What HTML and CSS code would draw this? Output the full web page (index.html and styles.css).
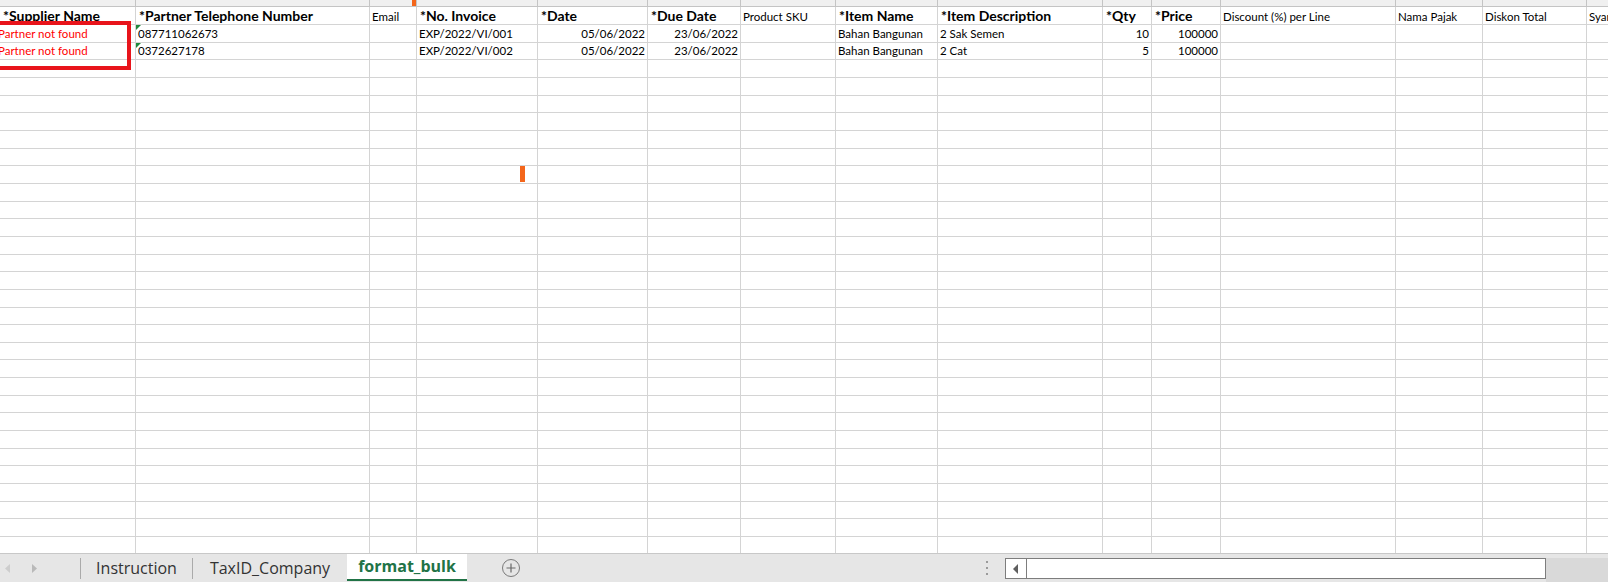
FILE: index.html
```html
<!DOCTYPE html>
<html lang="en">
<head>
    <meta charset="UTF-8">
    <meta name="viewport" content="width=device-width, initial-scale=1.0">
    <title>format_bulk</title>
    <link rel="stylesheet" href="styles.css">
</head>
<body>

    <div class="workbook">
        <div class="sheet">
            <div class="grid" id="grid">
                <!-- Row scrolled off the top of the view -->
                <div class="row row-cut">
                    <div class="cell"></div>
                    <div class="cell"></div>
                    <div class="cell"></div>
                    <div class="cell"></div>
                    <div class="cell"></div>
                    <div class="cell"></div>
                    <div class="cell"></div>
                    <div class="cell"></div>
                    <div class="cell"></div>
                    <div class="cell"></div>
                    <div class="cell"></div>
                    <div class="cell"></div>
                    <div class="cell"></div>
                    <div class="cell"></div>
                    <div class="cell"></div>
                </div>

                <!-- Column titles -->
                <div class="row row-head">
                    <div class="cell first bold">*Supplier Name</div>
                    <div class="cell bold">*Partner Telephone Number</div>
                    <div class="cell">Email</div>
                    <div class="cell bold">*No. Invoice</div>
                    <div class="cell bold">*Date</div>
                    <div class="cell bold">*Due Date</div>
                    <div class="cell">Product SKU</div>
                    <div class="cell bold">*Item Name</div>
                    <div class="cell bold">*Item Description</div>
                    <div class="cell bold">*Qty</div>
                    <div class="cell bold">*Price</div>
                    <div class="cell">Discount (%) per Line</div>
                    <div class="cell">Nama Pajak</div>
                    <div class="cell">Diskon Total</div>
                    <div class="cell">Syarat Pembayaran</div>
                </div>

                <!-- Data rows -->
                <div class="row">
                    <div class="cell first error">Partner not found</div>
                    <div class="cell num-text">087711062673</div>
                    <div class="cell"></div>
                    <div class="cell">EXP/2022/VI/001</div>
                    <div class="cell right">05/06/2022</div>
                    <div class="cell right">23/06/2022</div>
                    <div class="cell"></div>
                    <div class="cell">Bahan Bangunan</div>
                    <div class="cell">2 Sak Semen</div>
                    <div class="cell right">10</div>
                    <div class="cell right">100000</div>
                    <div class="cell"></div>
                    <div class="cell"></div>
                    <div class="cell"></div>
                    <div class="cell"></div>
                </div>
                <div class="row">
                    <div class="cell first error">Partner not found</div>
                    <div class="cell num-text">0372627178</div>
                    <div class="cell"></div>
                    <div class="cell">EXP/2022/VI/002</div>
                    <div class="cell right">05/06/2022</div>
                    <div class="cell right">23/06/2022</div>
                    <div class="cell"></div>
                    <div class="cell">Bahan Bangunan</div>
                    <div class="cell">2 Cat</div>
                    <div class="cell right">5</div>
                    <div class="cell right">100000</div>
                    <div class="cell"></div>
                    <div class="cell"></div>
                    <div class="cell"></div>
                    <div class="cell"></div>
                </div>
            </div>

            <!-- Annotation and selection marks drawn over the grid -->
            <div class="error-box"></div>
            <div class="mark mark-col"></div>
            <div class="mark mark-cursor"></div>
        </div>

        <!-- Sheet tabs -->
        <div class="tabbar">
            <div class="tab-nav">
                <svg width="6" height="9" viewBox="0 0 6 9"><path d="M5 0 L0 4.5 L5 9 Z" fill="#cdcdcd"/></svg>
                <svg width="6" height="9" viewBox="0 0 6 9"><path d="M1 0 L6 4.5 L1 9 Z" fill="#b9b9b9"/></svg>
            </div>
            <span class="tab-sep"></span>
            <div class="tab tab-instruction">Instruction</div>
            <span class="tab-sep"></span>
            <div class="tab tab-taxid">TaxID_Company</div>
            <div class="tab tab-active">format_bulk</div>
            <div class="tab-add">
                <svg width="20" height="20" viewBox="0 0 20 20">
                    <circle cx="10" cy="10" r="8.5" fill="none" stroke="#7a7a7a" stroke-width="1"/>
                    <path d="M10 5.5 V14.5 M5.5 10 H14.5" stroke="#6a6a6a" stroke-width="1.2"/>
                </svg>
            </div>
            <div class="tab-space"></div>
            <div class="split-dots">
                <svg width="4" height="16" viewBox="0 0 4 16">
                    <rect x="1" y="1" width="2" height="2" fill="#9a9a9a"/>
                    <rect x="1" y="7" width="2" height="2" fill="#9a9a9a"/>
                    <rect x="1" y="13" width="2" height="2" fill="#9a9a9a"/>
                </svg>
            </div>
            <div class="hscroll">
                <div class="hscroll-btn">
                    <svg width="6" height="10" viewBox="0 0 6 10"><path d="M5 0 L0 5 L5 10 Z" fill="#5f5f5f"/></svg>
                </div>
                <div class="hscroll-thumb"></div>
                <div class="hscroll-track"></div>
            </div>
        </div>
    </div>

    <script>
        // Fill the rest of the visible sheet with empty rows
        const grid = document.getElementById('grid');
        for (let r = 0; r < 28; r++) {
            const row = document.createElement('div');
            row.className = 'row';
            for (let c = 0; c < 15; c++) {
                const cell = document.createElement('div');
                cell.className = 'cell';
                row.appendChild(cell);
            }
            grid.appendChild(row);
        }
    </script>

</body>
</html>
```

FILE: styles.css
```css
html, body {
    margin: 0;
    padding: 0;
    overflow: hidden;
    background-color: white;
}

body {
    font-family: Lato, "Liberation Sans", sans-serif;
    color: #000;
}

.workbook {
    width: 1608px;
    height: 582px;
    display: flex;
    flex-direction: column;
}

/* Grid */

.sheet {
    position: relative;
    height: 553px;
    overflow: hidden;
}

.grid {
    margin-left: -6px;
    width: max-content;
}

.row {
    display: grid;
    grid-template-columns: 142px 234px 47px 121px 110px 93px 95px 102px 165px 49px 69px 175px 87px 104px 100px;
    height: 17.667px;
}

.cell {
    position: relative;
    box-sizing: border-box;
    display: flex;
    align-items: flex-end;
    padding: 0 2px 2px 2px;
    border-right: 1px solid #d4d4d4;
    border-bottom: 1px solid #d4d4d4;
    font-size: 11.5px;
    line-height: 13px;
    white-space: nowrap;
    overflow: hidden;
}

.row-cut {
    height: 7px;
}

.row-cut .cell {
    background-color: #f0f0f0;
    border-color: #c4c4c4;
}

.row-head {
    height: 18px;
}

.row-head .cell {
    padding-bottom: 1px;
}

.row-head .cell.bold {
    font-size: 14px;
    line-height: 15px;
    font-weight: bold;
    padding-left: 3px;
}

.row-head .cell.first {
    padding-left: 9px;
}

.cell.first {
    padding-left: 4px;
}

.cell.right {
    justify-content: flex-end;
    padding-right: 2px;
}

.cell.error {
    color: #ff0000;
}

/* green "number stored as text" flag */
.cell.num-text::before {
    content: "";
    position: absolute;
    top: 0;
    left: 0;
    border-top: 5px solid #1e8a3c;
    border-right: 5px solid transparent;
}

.error-box {
    position: absolute;
    left: -10px;
    top: 21px;
    width: 141px;
    height: 49px;
    box-sizing: border-box;
    border: 4px solid #e8141b;
}

.mark {
    position: absolute;
    background-color: #f4661b;
}

.mark-col {
    left: 412px;
    top: 0;
    width: 4px;
    height: 6px;
}

.mark-cursor {
    left: 520px;
    top: 166px;
    width: 5px;
    height: 16px;
}

/* Sheet tabs */

.tabbar {
    height: 28px;
    display: flex;
    align-items: stretch;
    background-color: #e6e6e6;
    border-top: 1px solid #c8c8c8;
    font-family: "Open Sans", "Noto Sans", sans-serif;
    font-size: 16px;
    color: #333;
}

.tab-nav {
    width: 80px;
    display: flex;
    align-items: center;
    gap: 20px;
    padding-left: 5px;
    box-sizing: border-box;
}

.tab-sep {
    width: 1px;
    height: 21px;
    align-self: center;
    background-color: #aaaaaa;
}

.tab {
    display: flex;
    align-items: center;
    justify-content: center;
    line-height: 28px;
    padding-bottom: 1px;
}

.tab-instruction {
    width: 111px;
}

.tab-taxid {
    width: 154px;
}

.tab-active {
    width: 120px;
    background-color: white;
    color: #217346;
    font-weight: bold;
    border-bottom: 2px solid #217346;
    margin-bottom: 1px;
    padding-bottom: 0;
    line-height: 25px;
}

.tab-add {
    margin-left: 34px;
    display: flex;
    align-items: center;
}

.tab-space {
    flex: 1;
}

.split-dots {
    display: flex;
    align-items: center;
    margin-right: 16px;
}

.hscroll {
    width: 603px;
    display: flex;
    margin-top: 4px;
}

.hscroll-btn {
    width: 22px;
    height: 21px;
    box-sizing: border-box;
    border: 1px solid #7d7d7d;
    background-color: white;
    display: flex;
    align-items: center;
    justify-content: center;
}

.hscroll-thumb {
    width: 519px;
    height: 21px;
    box-sizing: border-box;
    border: 1px solid #7d7d7d;
    border-left: none;
    background-color: white;
}

.hscroll-track {
    flex: 1;
    background-color: #d9d9d9;
}
```
